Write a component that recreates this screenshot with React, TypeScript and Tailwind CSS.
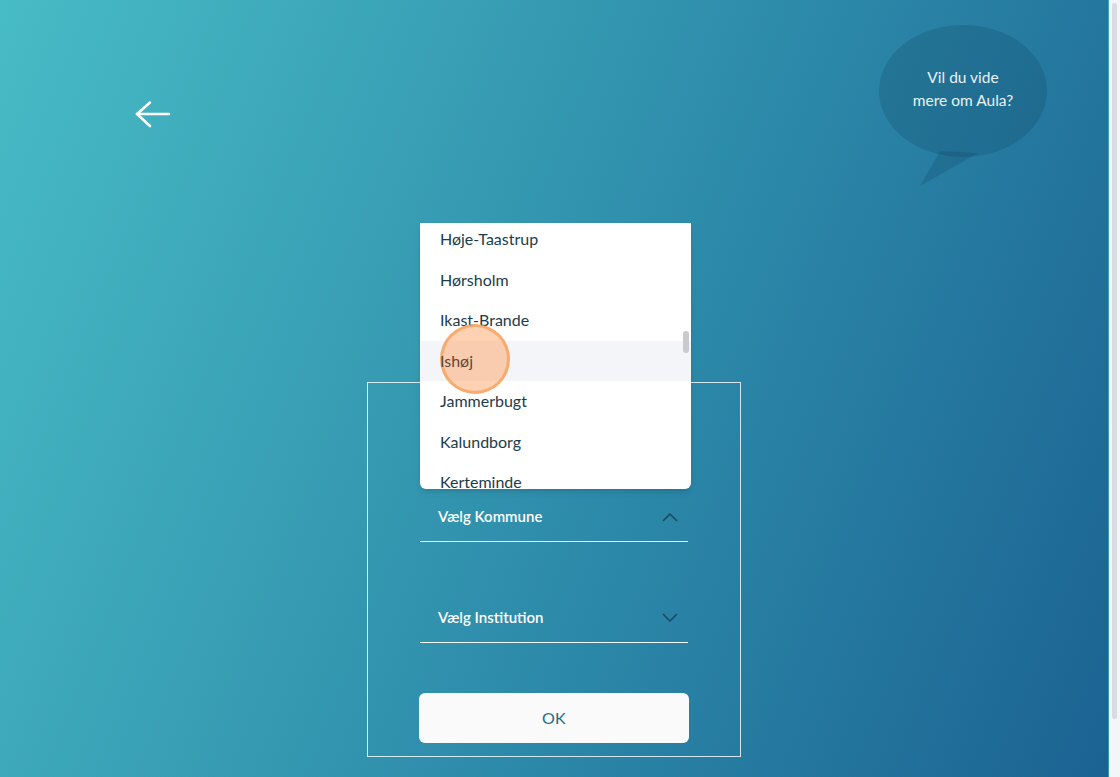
import React from 'react';

const kommuner = ['Høje-Taastrup', 'Hørsholm', 'Ikast-Brande', 'Ishøj', 'Jammerbugt', 'Kalundborg', 'Kerteminde', 'Kolding'];

function BackArrow() {
  return (
    <svg width="36" height="28" viewBox="0 0 36 28" fill="none" stroke="white" strokeWidth="2.6" strokeLinecap="round" strokeLinejoin="round">
      <path d="M2 13h32" />
      <path d="M15 1.5L2 13l13 12" />
    </svg>
  );
}

function Chevron({ up }: { up?: boolean }) {
  return (
    <svg width="16" height="10" viewBox="0 0 16 10" fill="none" stroke="#1b4a5c" strokeWidth="1.6" strokeLinecap="round" strokeLinejoin="round">
      <path d={up ? 'M1.5 8.5L8 2l6.5 6.5' : 'M1.5 1.5L8 8l6.5-6.5'} />
    </svg>
  );
}

function Bubble() {
  return (
    <div className="relative w-[170px] h-[162px]">
      <svg className="absolute inset-0" width="170" height="162" viewBox="0 0 170 162">
        <ellipse cx="85" cy="66" rx="84" ry="66" fill="rgba(12,62,92,0.22)" />
        <path d="M62 126 L42 161 L100 128 Z" fill="rgba(12,62,92,0.22)" />
      </svg>
      <p className="relative pt-[41px] text-center text-[15.5px] leading-[23px] text-[#e9f2f5]">
        Vil du vide
        <br />
        mere om Aula?
      </p>
    </div>
  );
}

function SelectRow({ label, open }: { label: string; open?: boolean }) {
  return (
    <div className="mx-[1px] h-[50px] flex items-center justify-between pl-[18px] pr-[10px] border-b-[1.5px] border-white/95">
      <span className="text-[15px] font-semibold text-white">{label}</span>
      <Chevron up={open} />
    </div>
  );
}

export default function App() {
  return (
    <div className="flex h-[777px] w-full overflow-hidden" style={{ fontFamily: 'Lato, "Open Sans", sans-serif' }}>
      <main className="relative w-[1109px] h-full border-r border-black/10 bg-[linear-gradient(112deg,#47bbc6_0%,#3aa2b6_30%,#2b87a8_60%,#1b6292_100%)]">
        {/* Header */}
        <header className="h-[382px] flex items-start justify-between">
          <button className="mt-[101px] ml-[135px]">
            <BackArrow />
          </button>
          <div className="mt-[25px] mr-[60px]">
            <Bubble />
          </div>
        </header>

        {/* Form */}
        <div className="relative mx-auto w-[374px] h-[375px] border border-white/80 px-[51px] pt-[109px]">
          {/* Open dropdown list */}
          <div className="absolute left-[52px] top-[-160px] w-[271px] h-[266px] bg-white rounded-b-md shadow-md overflow-hidden z-10">
            <ul className="-mt-[4px]">
              {kommuner.map((k) => (
                <li
                  key={k}
                  className={`h-[40.5px] flex items-center pl-[20px] text-[16px] ${k === 'Ishøj' ? 'bg-[#f3f5f8]' : ''}`}
                >
                  <span className={k === 'Ishøj' ? 'relative z-20 text-[#5e4635]' : 'text-[#1d3c48]'}>{k}</span>
                </li>
              ))}
            </ul>
            {/* tap marker */}
            <div className="absolute left-[20px] top-[101px] w-[70px] h-[70px] rounded-full bg-[#ffa468]/50 border-[3px] border-[#f6a25c]/80 z-10" />
            <div className="absolute right-[2px] top-[108px] w-[6px] h-[22px] rounded-full bg-[#c9cacc]" />
          </div>

          <div className="flex flex-col gap-[51px]">
            <SelectRow label="Vælg Kommune" open />
            <SelectRow label="Vælg Institution" />
            <button className="-mt-[1px] h-[50px] w-full rounded-md bg-[#fafafa] text-[16px] text-[#1f6d84] tracking-wide">OK</button>
          </div>
        </div>
      </main>
      <aside className="flex-1 bg-[#f3f5f7] pt-[3px] pl-[3px]">
        <div className="w-[5px] h-[716px] rounded-full bg-[#d8dbdf]" />
      </aside>
    </div>
  );
}
